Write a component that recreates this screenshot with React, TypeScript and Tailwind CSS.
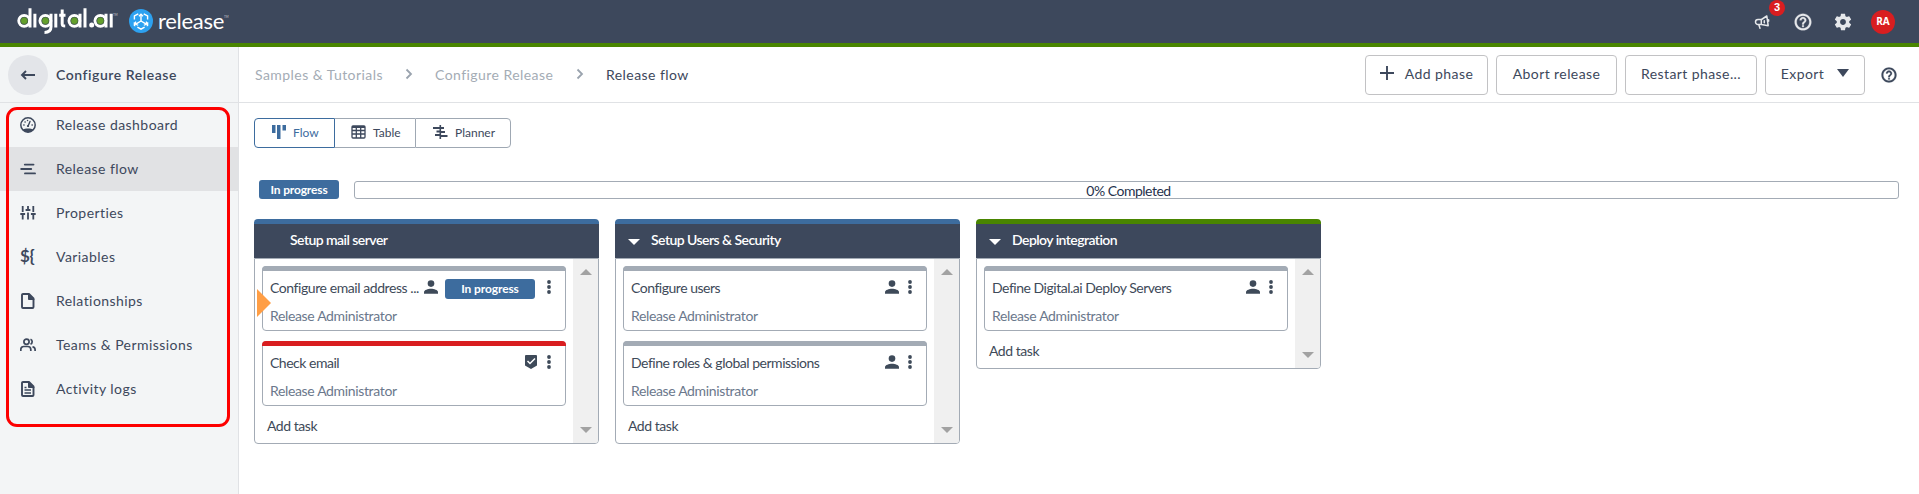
import React from "react";

type IconProps = { className?: string };

function HelpIcon({ className }: IconProps) {
  return (
    <svg viewBox="0 0 24 24" className={className} fill="currentColor">
      <path d="M11 18h2v-2h-2v2zm1-16C6.48 2 2 6.48 2 12s4.48 10 10 10 10-4.48 10-10S17.52 2 12 2zm0 17.6c-4.2 0-7.6-3.400-7.6-7.600S7.800 4.400 12 4.400s7.600 3.400 7.600 7.600-3.400 7.600-7.600 7.600zM12 6c-2.210 0-4 1.790-4 4h2.200c0-1 .8-1.800 1.800-1.800s1.800.8 1.800 1.800c0 1.800-2.900 1.700-2.900 5h2.200c0-2.250 2.900-2.500 2.900-5 0-2.210-1.790-4-4-4z" stroke="currentColor" strokeWidth="0.300" />
    </svg>
  );
}

function GearIcon() {
  return (
    <svg viewBox="0 0 24 24" className="size-5 text-[#e6e8eb]" fill="currentColor">
      <path d="M19.430 12.980c.04-.32.07-.64.07-.98s-.03-.66-.07-.98l2.110-1.650c.19-.15.24-.42.12-.64l-2-3.460c-.12-.22-.39-.3-.61-.22l-2.490 1c-.52-.4-1.080-.73-1.690-.98l-.38-2.650C14.460 2.180 14.250 2 14 2h-4c-.25 0-.46.18-.49.42l-.38 2.650c-.61.25-1.170.59-1.690.98l-2.490-1c-.23-.09-.49 0-.61.22l-2 3.460c-.13.22-.07.49.12.64l2.110 1.650c-.04.32-.07.65-.07.98s.03.66.07.98l-2.110 1.650c-.19.15-.24.42-.12.64l2 3.460c.12.22.39.3.61.22l2.490-1c.52.4 1.080.73 1.690.98l.38 2.650c.03.24.24.42.49.42h4c.25 0 .46-.18.49-.42l.38-2.650c.61-.25 1.170-.59 1.690-.98l2.490 1c.23.09.49 0 .61-.22l2-3.460c.12-.22.07-.49-.12-.64l-2.110-1.650zM12 15.500c-1.930 0-3.500-1.570-3.500-3.500s1.570-3.500 3.500-3.500 3.500 1.570 3.500 3.500-1.570 3.500-3.500 3.500z" />
    </svg>
  );
}

function MegaphoneIcon() {
  return (
    <svg viewBox="0 0 16 16" className="size-4" fill="none" stroke="#e6e8eb" strokeWidth="1.500" strokeLinejoin="round" strokeLinecap="round">
      <path d="M4 5.500h3.500L12.800 2l1.400 9.700L7.500 10.500H4a2.500 2.500 0 0 1 0-5zM4.800 10.700l1.200 3.500M7.300 5.500v5" />
      <path d="M10.300 6.800v2M14.600 5.800v1.500" />
    </svg>
  );
}

function ReleaseMark() {
  return (
    <svg viewBox="0 0 24 24" className="size-6">
      <circle cx="12" cy="12" r="12" fill="#2da1f0" />
      <g fill="none" stroke="#fff" strokeWidth="1.400">
        <path d="M12 12V5.500M12 12l-5.200 3.200M12 12l5.200 3.200" />
        <path d="M9.900 7.200L12 5.200l2.100 2M6.600 12.600v2.700l2.600.9M17.400 12.600v2.700l-2.600.9" strokeWidth="1.200" />
        <path d="M9.300 4.800L5.400 7v3.600M14.700 4.800L18.600 7v3.600M8.400 18.200l3.600 2 3.600-2M5.400 13.200v3.200l1 .6M18.600 13.200v3.200l-1 .6" />
      </g>
    </svg>
  );
}

function DigitalWordmark() {
  return (
    <svg viewBox="0 0 104 30" className="h-[30px] w-[104px]" fill="none" stroke="#fff" strokeWidth="3">
      <circle cx="8.200" cy="13.800" r="5.400" />
      <circle cx="29.400" cy="13.800" r="5.400" />
      <circle cx="58.400" cy="13.800" r="5.400" />
      <circle cx="84.400" cy="13.800" r="5.400" />
      <path d="M14 1.300v19.200M18.900 6.800v13.700M35 6.800v13c0 4-2.500 5.600-6.500 5.600M39.800 6.800v13.700M46.200 2.500v14.500c0 1.700.7 2 3 2M43.200 8.300h6.300M64 6.800v13.700M69 1.300v19.200M90 6.800v13.700M95.200 6.800v13.700" />
      <circle cx="75.700" cy="18" r="2.500" fill="#fff" stroke="none" />
      <g fill="#64a02c" stroke="#4b6a45" strokeWidth="0.700">
        <circle cx="8.200" cy="13.800" r="3.500" />
        <circle cx="29.400" cy="13.800" r="3.500" />
        <circle cx="58.400" cy="13.800" r="3.500" />
        <circle cx="84.400" cy="13.800" r="3.500" />
      </g>
    </svg>
  );
}

function NavIcon({ name }: { name: string }) {
  if (name === "Variables") {
    return <span className="-mt-0.5 block w-[18px] text-[17px] leading-4 font-bold tracking-[-0.3px]">{"${"}</span>;
  }
  return (
    <svg viewBox="0 0 16 16" className="size-4" fill="none" stroke="#3d485c" strokeWidth="1.500" strokeLinecap="round" strokeLinejoin="round">
      {name === "Release dashboard" && (
        <>
          <circle cx="8" cy="8" r="7.200" strokeWidth="1.500" />
          <path d="M2.500 12.500C5 11 11 11 13.500 12.500 11 16 5 16 2.500 12.500z" fill="#3d485c" stroke="none" />
          <path d="M8 9.200L10 4.500M3.800 8h.3M5 5h.2M7.500 3.500h.1M12 8h.3" strokeWidth="1.400" />
          <circle cx="8" cy="9" r="1.100" fill="#3d485c" stroke="none" />
        </>
      )}
      {name === "Release flow" && <path d="M4.800 3.600h8.700M1.200 8h10M5 12.400h10" strokeWidth="1.900" />}
      {name === "Properties" && (
        <path d="M2.700 1v6M2.700 9v5.500M.3 9h4.800M8 1v4M8 7.500v7M5.600 5h4.800M13.300 1v6M13.300 9v5.500M10.900 9h4.800" strokeWidth="1.800" strokeLinecap="butt" />
      )}
      {(name === "Relationships" || name === "Activity logs") && (
        <>
          <path d="M3 1h6l4.500 4.500v8.500a1 1 0 0 1-1 1H3a1 1 0 0 1-1-1V2a1 1 0 0 1 1-1z" strokeWidth="1.900" />
          <path d="M8.500 1v5.500h5.200z" fill="#3d485c" strokeWidth="1" />
        </>
      )}
      {name === "Activity logs" && <path d="M4.500 6.500h2M4.500 9h6.500M4.500 12h6.500" strokeWidth="1.400" strokeLinecap="butt" />}
      {name === "Teams & Permissions" && (
        <>
          <path d="M.8 14v-1.500a3 3 0 0 1 3-3h4a3 3 0 0 1 3 3V14M12.500 9.800a3 3 0 0 1 2.600 2.700V14M10.500 2.200a2.700 2.700 0 0 1 0 5" strokeWidth="1.700" strokeLinecap="butt" />
          <circle cx="6.500" cy="4.700" r="2.600" strokeWidth="1.700" />
        </>
      )}
    </svg>
  );
}

const navItems = [
  "Release dashboard",
  "Release flow",
  "Properties",
  "Variables",
  "Relationships",
  "Teams & Permissions",
  "Activity logs",
];

function Header() {
  return (
    <header className="flex h-[47px] shrink-0 items-start border-b-4 border-[#498500] bg-[#3d485c] pr-6 pl-4">
      <div className="mt-[7px] flex">
        <DigitalWordmark />
        <span className="-ml-[7px] w-2 pt-[7px] text-[3px] leading-none text-white/70">TM</span>
      </div>
      <div className="mt-[9px] ml-2 flex items-center">
        <ReleaseMark />
        <span className="-mt-px ml-[5px] text-[22px] leading-6 tracking-[-0.3px] text-white">release</span>
        <span className="h-4 pt-[3px] text-[3px] leading-none text-white/70">TM</span>
      </div>
      <div className="ml-auto flex h-[43px] items-center">
        <div className="relative mr-[23px]">
          <MegaphoneIcon />
          <span className="absolute -top-[14px] left-[15px] flex size-4 items-center justify-center rounded-full bg-[#d91e20] font-['Liberation_Sans'] text-[11px] font-bold text-white">3</span>
        </div>
        <HelpIcon className="mr-5 size-5 text-[#e6e8eb]" />
        <GearIcon />
        <div className="ml-[18px] flex size-6 items-center justify-center rounded-full bg-[#d91e20] font-['Open_Sans'] text-[10px] font-bold text-white">RA</div>
      </div>
    </header>
  );
}

function Sidebar() {
  return (
    <aside className="relative w-[239px] shrink-0 border-r border-[#e0e2e5] bg-[#f3f5f6]">
      <div className="flex h-14 items-center border-b border-[#e0e2e5] pl-2">
        <div className="flex size-10 items-center justify-center rounded-full bg-[#e3e5e9]">
          <svg viewBox="0 0 16 12" className="h-3 w-4" fill="none" stroke="#3d485c" strokeWidth="1.900">
            <path d="M15 6H2M6 2L2 6l4 4" />
          </svg>
        </div>
        <span className="ml-2 text-[14px] font-semibold tracking-[0.55px]">Configure Release</span>
      </div>
      <nav>
        {navItems.map((item) => (
          <div key={item} className={item === "Release flow" ? "flex h-11 items-center bg-[#e1e2e4] pl-5" : "flex h-11 items-center pl-5"}>
            <div className="w-9">
              <NavIcon name={item} />
            </div>
            <span className="-mt-0.5 text-[14px] tracking-[0.44px]">{item}</span>
          </div>
        ))}
      </nav>
      <div className="pointer-events-none absolute top-[60px] left-1.5 h-[320px] w-[224px] rounded-[11px] border-[3px] border-[#fd0000]" />
    </aside>
  );
}

function Chevron() {
  return (
    <svg viewBox="0 0 8 12" className="mx-[22px] -mt-0.5 h-3 w-2" fill="none" stroke="#9aa3ae" strokeWidth="1.800">
      <path d="M1.500 1.500L6 6l-4.500 4.500" />
    </svg>
  );
}

const btn = "flex h-10 shrink-0 items-center justify-center rounded border border-[#c2c2c4] pb-0.5 text-[14px] tracking-[0.42px]";

function Toolbar() {
  return (
    <div className="flex h-14 items-center border-b border-[#e0e2e5] pr-[21px] pl-4 text-[14px] tracking-[0.44px]">
      <div className="flex items-center text-[#a4acb5]">
        <span className="w-[128px] whitespace-nowrap">Samples &amp; Tutorials</span>
        <Chevron />
        <span className="w-[119px] whitespace-nowrap">Configure Release</span>
        <Chevron />
        <span className="text-[#3d485c]">Release flow</span>
      </div>
      <div className="ml-auto flex items-center gap-2">
        <div className={btn + " w-[123px]"}>
          <svg viewBox="0 0 14 14" className="-mt-0.5 mr-[11px] size-3.5" stroke="#3d485c" strokeWidth="1.900">
            <path d="M7 0v14M0 7h14" />
          </svg>
          <span>Add phase</span>
        </div>
        <div className={btn + " w-[121px]"}>Abort release</div>
        <div className={btn + " w-[132px]"}>Restart phase...</div>
        <div className={btn + " w-[100px]"}>
          <span>Export</span>
          <svg viewBox="0 0 12 8" className="-mt-0.5 ml-[13px] h-2 w-3" fill="#3d485c">
            <path d="M0 0h12L6 8z" />
          </svg>
        </div>
        <HelpIcon className="ml-[7px] size-[18px]" />
      </div>
    </div>
  );
}

function ViewToggle() {
  return (
    <div className="ml-[15px] flex h-[30px] w-[257px] text-[12px]">
      <div className="flex w-[81px] items-center rounded-l border border-[#3d6c9e] pl-[17px] text-[#3d6c9e]">
        <svg viewBox="0 0 14 14" className="-mt-0.5 mr-[7px] size-3.5" fill="#3d6c9e">
          <path d="M0 0h3.500v8H0zM5 0h3.500v14H5zM10.500 0H14v5.500h-3.500z" />
        </svg>
        Flow
      </div>
      <div className="flex w-20 items-center border-y border-[#9fa8b3] pl-4">
        <svg viewBox="0 0 15 14" className="-mt-0.5 mr-[7px] h-3.5 w-[15px]" fill="none" stroke="#3d485c" strokeWidth="1.300">
          <rect x="1" y="1" width="13" height="12" rx="1" />
          <path d="M1 2h13" strokeWidth="2" />
          <path d="M1 5.500h13M1 9h13M5.300 2v11M9.700 2v11" />
        </svg>
        Table
      </div>
      <div className="flex w-24 items-center rounded-r border border-[#9fa8b3] pl-[17px]">
        <svg viewBox="0 0 15 14" className="-mt-0.5 mr-[7px] h-3.5 w-[15px]" fill="#3d485c">
          <path d="M6.500 0h1.600v14H6.500zM0 2h6.500v2H0zM8 2h3v2H8zM3.500 5.500h3v2h-3zM8 6h4v2H8zM2 9h4.500v2H2zM8 10h6.500v2H8z" />
        </svg>
        Planner
      </div>
    </div>
  );
}

function Dots() {
  return (
    <svg viewBox="0 0 4 14" className="ml-[9px] h-3.5 w-1" fill="#3e4a59">
      <circle cx="2" cy="2" r="1.900" />
      <circle cx="2" cy="7" r="1.900" />
      <circle cx="2" cy="12" r="1.900" />
    </svg>
  );
}

function PersonIcon() {
  return (
    <svg viewBox="0 0 14 14" className="h-3.5 w-3.5" fill="#3e4a59">
      <circle cx="7" cy="3.600" r="3.300" />
      <path d="M0 13.800v-1.600C0 10 4 8.800 7 8.800s7 1.200 7 3.400v1.600z" />
    </svg>
  );
}

function GateIcon() {
  return (
    <svg viewBox="0 0 12 14" className="mr-px h-3.5 w-3" fill="#3e4a59">
      <path d="M1 0h10a1 1 0 0 1 1 1v9.500L6 14l-6-3.500V1a1 1 0 0 1 1-1z" />
      <path d="M2.500 6l2.500 2.500L10 3.500" fill="none" stroke="#fff" strokeWidth="1.500" />
    </svg>
  );
}

type Task = { title: string; active?: boolean; gate?: boolean };
type Phase = { title: string; bar: string; caret: boolean; tasks: Task[] };

const phases: Phase[] = [
  {
    title: "Setup mail server",
    bar: "border-[#3d6c9e]",
    caret: false,
    tasks: [{ title: "Configure email address ...", active: true }, { title: "Check email", gate: true }],
  },
  {
    title: "Setup Users & Security",
    bar: "border-[#3d6c9e]",
    caret: true,
    tasks: [{ title: "Configure users" }, { title: "Define roles & global permissions" }],
  },
  {
    title: "Deploy integration",
    bar: "border-[#498500]",
    caret: true,
    tasks: [{ title: "Define Digital.ai Deploy Servers" }],
  },
];

function TaskCard({ task }: { task: Task }) {
  return (
    <div className="relative mb-2.5 h-[65px] rounded border border-[#a3abb5] bg-white">
      <div className={task.gate ? "-mx-px -mt-px h-[5px] rounded-t bg-[#d91e20]" : "-mx-px -mt-px h-[5px] rounded-t bg-[#a3abb5]"} />
      <div className="mt-1 flex h-6 items-center pr-3.5 pl-[7px]">
        <span className={task.active ? "tracking-[-0.43px] whitespace-nowrap" : "tracking-[-0.48px] whitespace-nowrap"}>{task.title}</span>
        <div className="ml-auto flex items-center">
          {task.gate ? <GateIcon /> : <PersonIcon />}
          {task.active && (
            <span className="mt-0.5 -mb-px ml-[7px] flex h-5 w-[90px] items-center justify-center rounded-[3px] bg-[#3d6c9e] text-[12px] font-bold tracking-[-0.1px] text-white">In progress</span>
          )}
          <div className={task.active ? "ml-[3px] flex" : "flex"}>
            <Dots />
          </div>
        </div>
      </div>
      <div className="mt-[5px] pl-[7px] leading-6 tracking-[-0.35px] text-[#6b788c]">Release Administrator</div>
      {task.active && (
        <svg viewBox="0 0 14 28" className="absolute top-[22px] -left-[6px] h-7 w-3.5" fill="#ff9e45">
          <path d="M0 0l14 14L0 28z" />
        </svg>
      )}
    </div>
  );
}

function PhaseColumn({ phase }: { phase: Phase }) {
  return (
    <section className="w-[345px] text-[14px] text-[#3e4a59]">
      <div className={"flex h-[39px] items-center rounded-t-[4px] border-t-[5px] bg-[#3d485c] pl-[13px] font-bold text-white " + phase.bar}>
        <svg viewBox="0 0 12 6" className="mt-0.5 mr-[11px] h-1.5 w-3" fill={phase.caret ? "#fff" : "none"}>
          <path d="M0 0h12L6 6z" />
        </svg>
        <span className="-mt-[3px] text-[14px] font-semibold tracking-[-0.55px]">{phase.title}</span>
      </div>
      <div className="flex rounded-b border border-[#a3abb5]">
        <div className="w-[318px] px-[7px] pt-[7px] pb-[5px]">
          {phase.tasks.map((task) => (
            <TaskCard key={task.title} task={task} />
          ))}
          <div className="-mt-0.5 pl-[5px] leading-6 tracking-[-0.45px]">Add task</div>
        </div>
        <div className="flex w-[25px] flex-col items-center justify-between rounded-br-[3px] bg-[#f0f0f0] pt-2.5 pb-2.5">
          <svg viewBox="0 0 12 6" className="h-1.5 w-3" fill="#a2a2a2">
            <path d="M0 6h12L6 0z" />
          </svg>
          <svg viewBox="0 0 12 6" className="h-1.5 w-3" fill="#a2a2a2">
            <path d="M0 0h12L6 6z" />
          </svg>
        </div>
      </div>
    </section>
  );
}

export default function App() {
  return (
    <div className="flex h-[494px] w-[1919px] flex-col overflow-hidden bg-white font-['Lato',sans-serif] text-[#3d485c]">
      <Header />
      <div className="flex min-h-0 flex-1">
        <Sidebar />
        <main className="flex-1">
          <Toolbar />
          <div className="pt-[15px]">
            <ViewToggle />
            <div className="mt-8 flex h-[19px] items-center pr-5 pl-5">
              <span className="mr-[15px] flex h-[19px] w-20 items-center justify-center rounded-[3px] bg-[#3d6c9e] text-[12px] font-bold tracking-[-0.15px] text-white">In progress</span>
              <div className="flex h-[18px] flex-1 items-center justify-center rounded-[3px] border border-[#a3abb5] pt-0.5 pl-1 text-[14px] leading-4 tracking-[-0.5px] text-[#26324d]">0% Completed</div>
            </div>
            <div className="mt-5 ml-[15px] flex items-start gap-4">
              {phases.map((phase) => (
                <PhaseColumn key={phase.title} phase={phase} />
              ))}
            </div>
          </div>
        </main>
      </div>
    </div>
  );
}
